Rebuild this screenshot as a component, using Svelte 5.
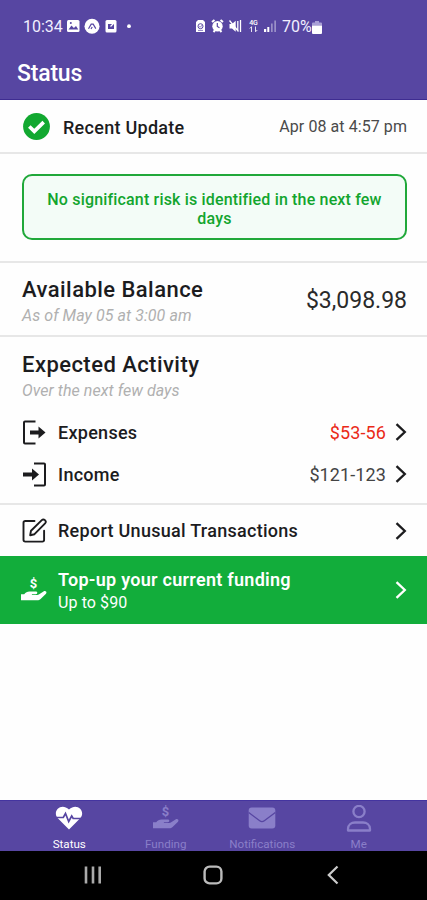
<script lang="ts">
  type Tab = { id: string; label: string };

  const tabs: Tab[] = [
    { id: 'status', label: 'Status' },
    { id: 'funding', label: 'Funding' },
    { id: 'notifications', label: 'Notifications' },
    { id: 'me', label: 'Me' },
  ];

  const activity = [
    { id: 'expenses', label: 'Expenses', amount: '$53-56' },
    { id: 'income', label: 'Income', amount: '$121-123' },
  ];

  let activeTab = $state('status');
</script>

{#snippet chevron()}
  <svg class="chevron" width="12" height="18" viewBox="0 0 12 18" fill="none" stroke="currentColor" stroke-width="2.3">
    <path d="M1.500 1.200 9.800 9l-8.300 7.800" />
  </svg>
{/snippet}

{#snippet hand()}
  <svg width="28" height="26" viewBox="0 0 28 26" fill="currentColor">
    <text x="13.400" y="11" text-anchor="middle" class="coin">$</text>
    <path d="M1 17.200h3.200c1.500-1.600 3-2.700 5.300-2.700h6.300c2 0 2 2.700 0 2.700h-3.900v.8h5.200c.8 0 1.500-.3 2.100-.8l4.300-2.700c1.800-1.200 4 .6 2.500 2.200l-5.400 5.300c-.9.900-2 1.300-3.300 1.300H1z" />
  </svg>
{/snippet}

<div class="phone">
  <header>
    <div class="system-bar">
      <span class="clock">10:34</span>
      <svg class="left-icons" width="110" height="18" viewBox="0 0 110 18" fill="#fff">
        <rect x="0" y="3" width="12.500" height="12" rx="1.500" />
        <path d="m1.500 12.500 3-4 2.400 2.400L9 9l2.300 3.500z" fill="#5746a2" />
        <circle cx="3.800" cy="6" r="1" fill="#5746a2" />
        <circle cx="25" cy="9.300" r="7.500" />
        <path d="m21.500 11.800 2.700-4.600h2l2.600 4.400M24 12l1.200-2" fill="none" stroke="#5746a2" stroke-width="1.200" />
        <rect x="38.500" y="3" width="11" height="12.500" rx="1.500" />
        <path d="M41 7h6v5h-6z" fill="#5746a2" />
        <path d="m43.500 9.500 3-3" stroke="#fff" stroke-width="1.200" />
        <circle cx="62" cy="9.200" r="1.900" />
      </svg>
      <svg class="right-icons" width="82" height="18" viewBox="0 0 82 18" fill="#fff">
        <path d="M3 3h5l2 2v10H1V5z" />
        <circle cx="5.500" cy="9.200" r="2.500" fill="none" stroke="#5746a2" />
        <path d="m4.400 9.200 1 1 1.500-2M3 13.400h5" fill="none" stroke="#5746a2" stroke-width=".7" />
        <circle cx="22.500" cy="9.300" r="5.200" />
        <path d="m17 5 2.500-2M28 5l-2.500-2M18.500 15l1.600-1.800M26.500 15l-1.600-1.800" stroke="#fff" stroke-width="2" />
        <path d="M22.300 6v3.500l2.200 1.200" fill="none" stroke="#5746a2" stroke-width="1.200" />
        <path d="M34.500 7H37l3.700-3.200v11L37 11.500h-2.500z" />
        <path d="m34.500 3.500 9 11M42.800 4v10M45.500 3v12" stroke="#fff" stroke-width="1.300" fill="none" />
        <text x="58.500" y="8.300" text-anchor="middle" class="net">4G</text>
        <path d="M56.500 15V9.700m-1.700 1.800 1.700-1.800M60.500 9.500v5.200m1.800-1.700-1.800 1.800" stroke="#fff" opacity=".85" fill="none" />
        <path d="M69 15v-3h2.200v3zM72.300 15v-5h2v5z" />
        <path d="M76 15V6.500h1.700V15zM79.300 15V3.500H81V15z" opacity=".4" />
      </svg>
      <span class="percent">70%</span>
      <svg class="battery" width="10" height="13" viewBox="0 0 10 13">
        <path d="M3 0h4v1.500h2q1 0 1 1V4.500H0v-2q0-1 1-1h2z" fill="#a99fd6" />
        <path d="M0 4.500h10V12q0 1-1 1H1q-1 0-1-1z" fill="#fff" />
      </svg>
    </div>
    <h1>Status</h1>
  </header>

  <section class="update">
    <svg width="27" height="27" viewBox="0 0 27 27">
      <circle cx="13.500" cy="13.500" r="13.400" fill="#12a830" />
      <path d="m6.300 13.500 5 4.900 9.400-9.300" fill="none" stroke="#fff" stroke-width="3.600" />
    </svg>
    <h3>Recent Update</h3>
    <time>Apr 08 at 4:57 pm</time>
  </section>

  <section class="risk">
    <p>No significant risk is identified in the next few days</p>
  </section>

  <section class="balance">
    <div>
      <h2>Available Balance</h2>
      <p class="hint">As of May 05 at 3:00 am</p>
    </div>
    <span class="total">$3,098.98</span>
  </section>

  <section class="activity">
    <h2>Expected Activity</h2>
    <p class="hint">Over the next few days</p>
    {#each activity as item (item.id)}
      <div class="row">
        <svg width="25" height="25" viewBox="0 0 25 25" fill="none" stroke="currentColor" stroke-width="2">
          {#if item.id === 'expenses'}
            <path d="M13.500 1.500H3q-1 0-1 1v20q0 1 1 1h10.500" />
            <path d="M8 12.500h10" stroke-width="4" />
            <path d="m16.500 6.500 7 6-7 6z" fill="currentColor" stroke="none" />
          {:else}
            <path d="M12 1.500h10q1 0 1 1v20q0 1-1 1H12" />
            <path d="M1 12.500h10" stroke-width="4" />
            <path d="m10 6.500 7 6-7 6z" fill="currentColor" stroke="none" />
          {/if}
        </svg>
        <h3>{item.label}</h3>
        <span class="amount" class:expense={item.id === 'expenses'}>{item.amount}</span>
        {@render chevron()}
      </div>
    {/each}
  </section>

  <section class="report">
    <svg width="25" height="25" viewBox="0 0 25 25" fill="none" stroke="currentColor" stroke-width="1.900" stroke-linejoin="round" stroke-linecap="round">
      <path d="M12.500 3H3.300Q1.500 3 1.500 4.800v17q0 1.800 1.800 1.800h17q1.800 0 1.800-1.800v-9" />
      <path d="M8.200 17.200 9 12.700 19.800 2.100c2-1.900 5.300 1 3.300 3.200L12.500 16.200z" />
    </svg>
    <h3>Report Unusual Transactions</h3>
    {@render chevron()}
  </section>

  <section class="topup">
    {@render hand()}
    <div>
      <h3>Top-up your current funding</h3>
      <p>Up to $90</p>
    </div>
    {@render chevron()}
  </section>

  <nav class="tabs">
    {#each tabs as tab (tab.id)}
      <button class:active={activeTab === tab.id} onclick={() => (activeTab = tab.id)}>
        {#if tab.id === 'status'}
          <svg width="28" height="26" viewBox="0 0 28 26">
            <path d="M14 24.500 2.800 13.200C-3.200 6.600 5.800-3 14 4.500c8.200-7.500 17.200 2.100 11.200 8.700z" fill="currentColor" />
            <path d="M0 12.500h8.300l2.200-4 3.200 8 3-5.500 1.500 2.500H28" fill="none" stroke="#5746a2" stroke-width="1.700" />
          </svg>
        {:else if tab.id === 'funding'}
          {@render hand()}
        {:else if tab.id === 'notifications'}
          <svg width="28" height="26" viewBox="0 0 28 26">
            <rect x=".7" y="2.600" width="26.600" height="20.800" rx="3" fill="currentColor" />
            <path d="m.7 7.500 11 8.200q2.300 1.800 4.600 0l11-8.200" fill="none" stroke="#5746a2" stroke-width="1.300" />
          </svg>
        {:else}
          <svg width="28" height="28" viewBox="0 0 28 28" fill="none" stroke="currentColor" stroke-width="2.300">
            <circle cx="14" cy="6.500" r="5.600" />
            <path d="M3 25.500V24c0-4.500 3.500-6.500 7-6.500h8c3.500 0 7 2 7 6.500v1.500z" stroke-linejoin="round" />
          </svg>
        {/if}
        <span>{tab.label}</span>
      </button>
    {/each}
  </nav>

  <div class="system-nav">
    <svg width="20" height="20" viewBox="0 0 20 20" stroke="#aaa" stroke-width="2.600">
      <path d="M3 1.500v17M10 1.500v17M16.700 1.500v17" />
    </svg>
    <svg width="20" height="20" viewBox="0 0 20 20" fill="none" stroke="#bbb" stroke-width="2.400">
      <rect x="1.600" y="1.600" width="16.800" height="16.800" rx="5" />
    </svg>
    <svg width="20" height="20" viewBox="0 0 20 20" fill="none" stroke="#ccc" stroke-width="2.200">
      <path d="M14.500 1.500 5.800 10l8.700 8.500" />
    </svg>
  </div>
</div>

<style>
  :global(body) {
    margin: 0;
  }

  .phone {
    display: flex;
    flex-direction: column;
    width: 427px;
    height: 900px;
    overflow: hidden;
    background: #fefefe;
    color: #1c1c1e;
    font-family: Roboto, sans-serif;
  }

  .phone :global(svg) {
    display: block;
    flex-shrink: 0;
  }

  h1, h2, h3, p {
    margin: 0;
    font-weight: 500;
    white-space: nowrap;
  }

  h2 {
    font-size: 22px;
    line-height: 26px;
    letter-spacing: 0.45px;
  }

  h3 {
    flex: 1;
    font-size: 18px;
    line-height: 22px;
    letter-spacing: 0.28px;
  }

  section {
    display: flex;
    align-items: center;
    box-sizing: border-box;
    flex-shrink: 0;
    padding: 0 20px 0 22px;
    border-bottom: 2px solid #e7e7e7;
  }

  header {
    height: 100px;
    flex-shrink: 0;
    box-sizing: border-box;
    background: #5746a2;
    border-bottom: 1px solid #3e2c91;
    color: #fff;
  }

  .system-bar {
    display: flex;
    align-items: center;
    height: 52px;
    padding-left: 23px;
    font-size: 16px;
    color: #f1efff;
  }

  .clock { width: 44px; }
  .left-icons { margin-right: 18px; }
  .percent { margin-left: 5px; width: 30px; }
  .battery { margin: 2px 0 0; }

  .net {
    font: 500 7px Roboto, sans-serif;
  }

  .coin {
    font: 700 13px Roboto, sans-serif;
  }

  h1 {
    padding-left: 17px;
    font-size: 23px;
    line-height: 43px;
    letter-spacing: -0.2px;
  }

  .update {
    height: 54px;
    padding-left: 23px;
  }

  .update h3 {
    margin-left: 13px;
    padding-top: 3px;
  }

  time {
    padding-top: 1px;
    font-size: 16px;
    letter-spacing: 0.07px;
    color: #4a4a4a;
  }

  .risk {
    height: 109px;
    padding-bottom: 1px;
  }

  .risk p {
    flex: 1;
    box-sizing: border-box;
    height: 66px;
    padding: 14px 18px 0;
    border: 2px solid #20a83a;
    border-radius: 10px;
    background: #f3fcf7;
    color: #12a52e;
    font-size: 16px;
    line-height: 19px;
    letter-spacing: 0.17px;
    text-align: center;
    white-space: normal;
  }

  .balance {
    height: 74px;
    padding-top: 5px;
    justify-content: space-between;
  }

  .hint {
    padding-top: 2px;
    font-size: 16px;
    line-height: 22px;
    letter-spacing: 0.06px;
    font-style: italic;
    font-weight: 400;
    color: #b0b0b0;
  }

  .total {
    padding-bottom: 3px;
    font-size: 23px;
    color: #2a2a2a;
  }

  .activity {
    display: block;
    height: 168px;
    padding-top: 15px;
  }

  .row {
    display: flex;
    align-items: center;
    height: 42px;
  }

  .activity .hint {
    margin-bottom: 9px;
  }

  .row h3,
  .report h3 {
    margin-left: 11px;
  }

  .row h3 {
    padding-top: 1px;
  }

  .amount {
    font-size: 18px;
    letter-spacing: 0.1px;
    color: #444;
  }

  .expense {
    color: #ea2a18;
  }

  .chevron {
    margin-left: 9px;
  }

  .report {
    height: 51px;
    border: 0;
  }

  .topup {
    height: 68px;
    border: 0;
    background: #12ad3b;
    color: #fff;
    padding-left: 20px;
  }

  .topup div {
    flex: 1;
    margin-left: 10px;
    padding-top: 3px;
  }

  .topup h3 {
    font-weight: 600;
  }

  .topup p {
    padding-top: 1px;
    font-size: 16px;
    line-height: 22px;
    letter-spacing: 0.1px;
    font-weight: 400;
  }

  .tabs {
    display: flex;
    height: 51px;
    box-sizing: border-box;
    margin-top: auto;
    padding: 0 20px 0 21px;
    flex-shrink: 0;
    background: #5746a2;
    border-top: 1px solid #4434a0;
  }

  .tabs button {
    display: flex;
    flex: 1;
    flex-direction: column;
    align-items: center;
    justify-content: space-between;
    padding: 4px 0 0;
    border: 0;
    background: none;
    color: #8a7fc9;
    font: 400 11.6px Roboto, sans-serif;
  }

  .tabs button.active {
    color: #fff;
  }

  .system-nav {
    display: flex;
    align-items: center;
    height: 49px;
    box-sizing: border-box;
    padding: 0 84px 2px 83px;
    justify-content: space-between;
    flex-shrink: 0;
    background: #000;
  }
</style>
